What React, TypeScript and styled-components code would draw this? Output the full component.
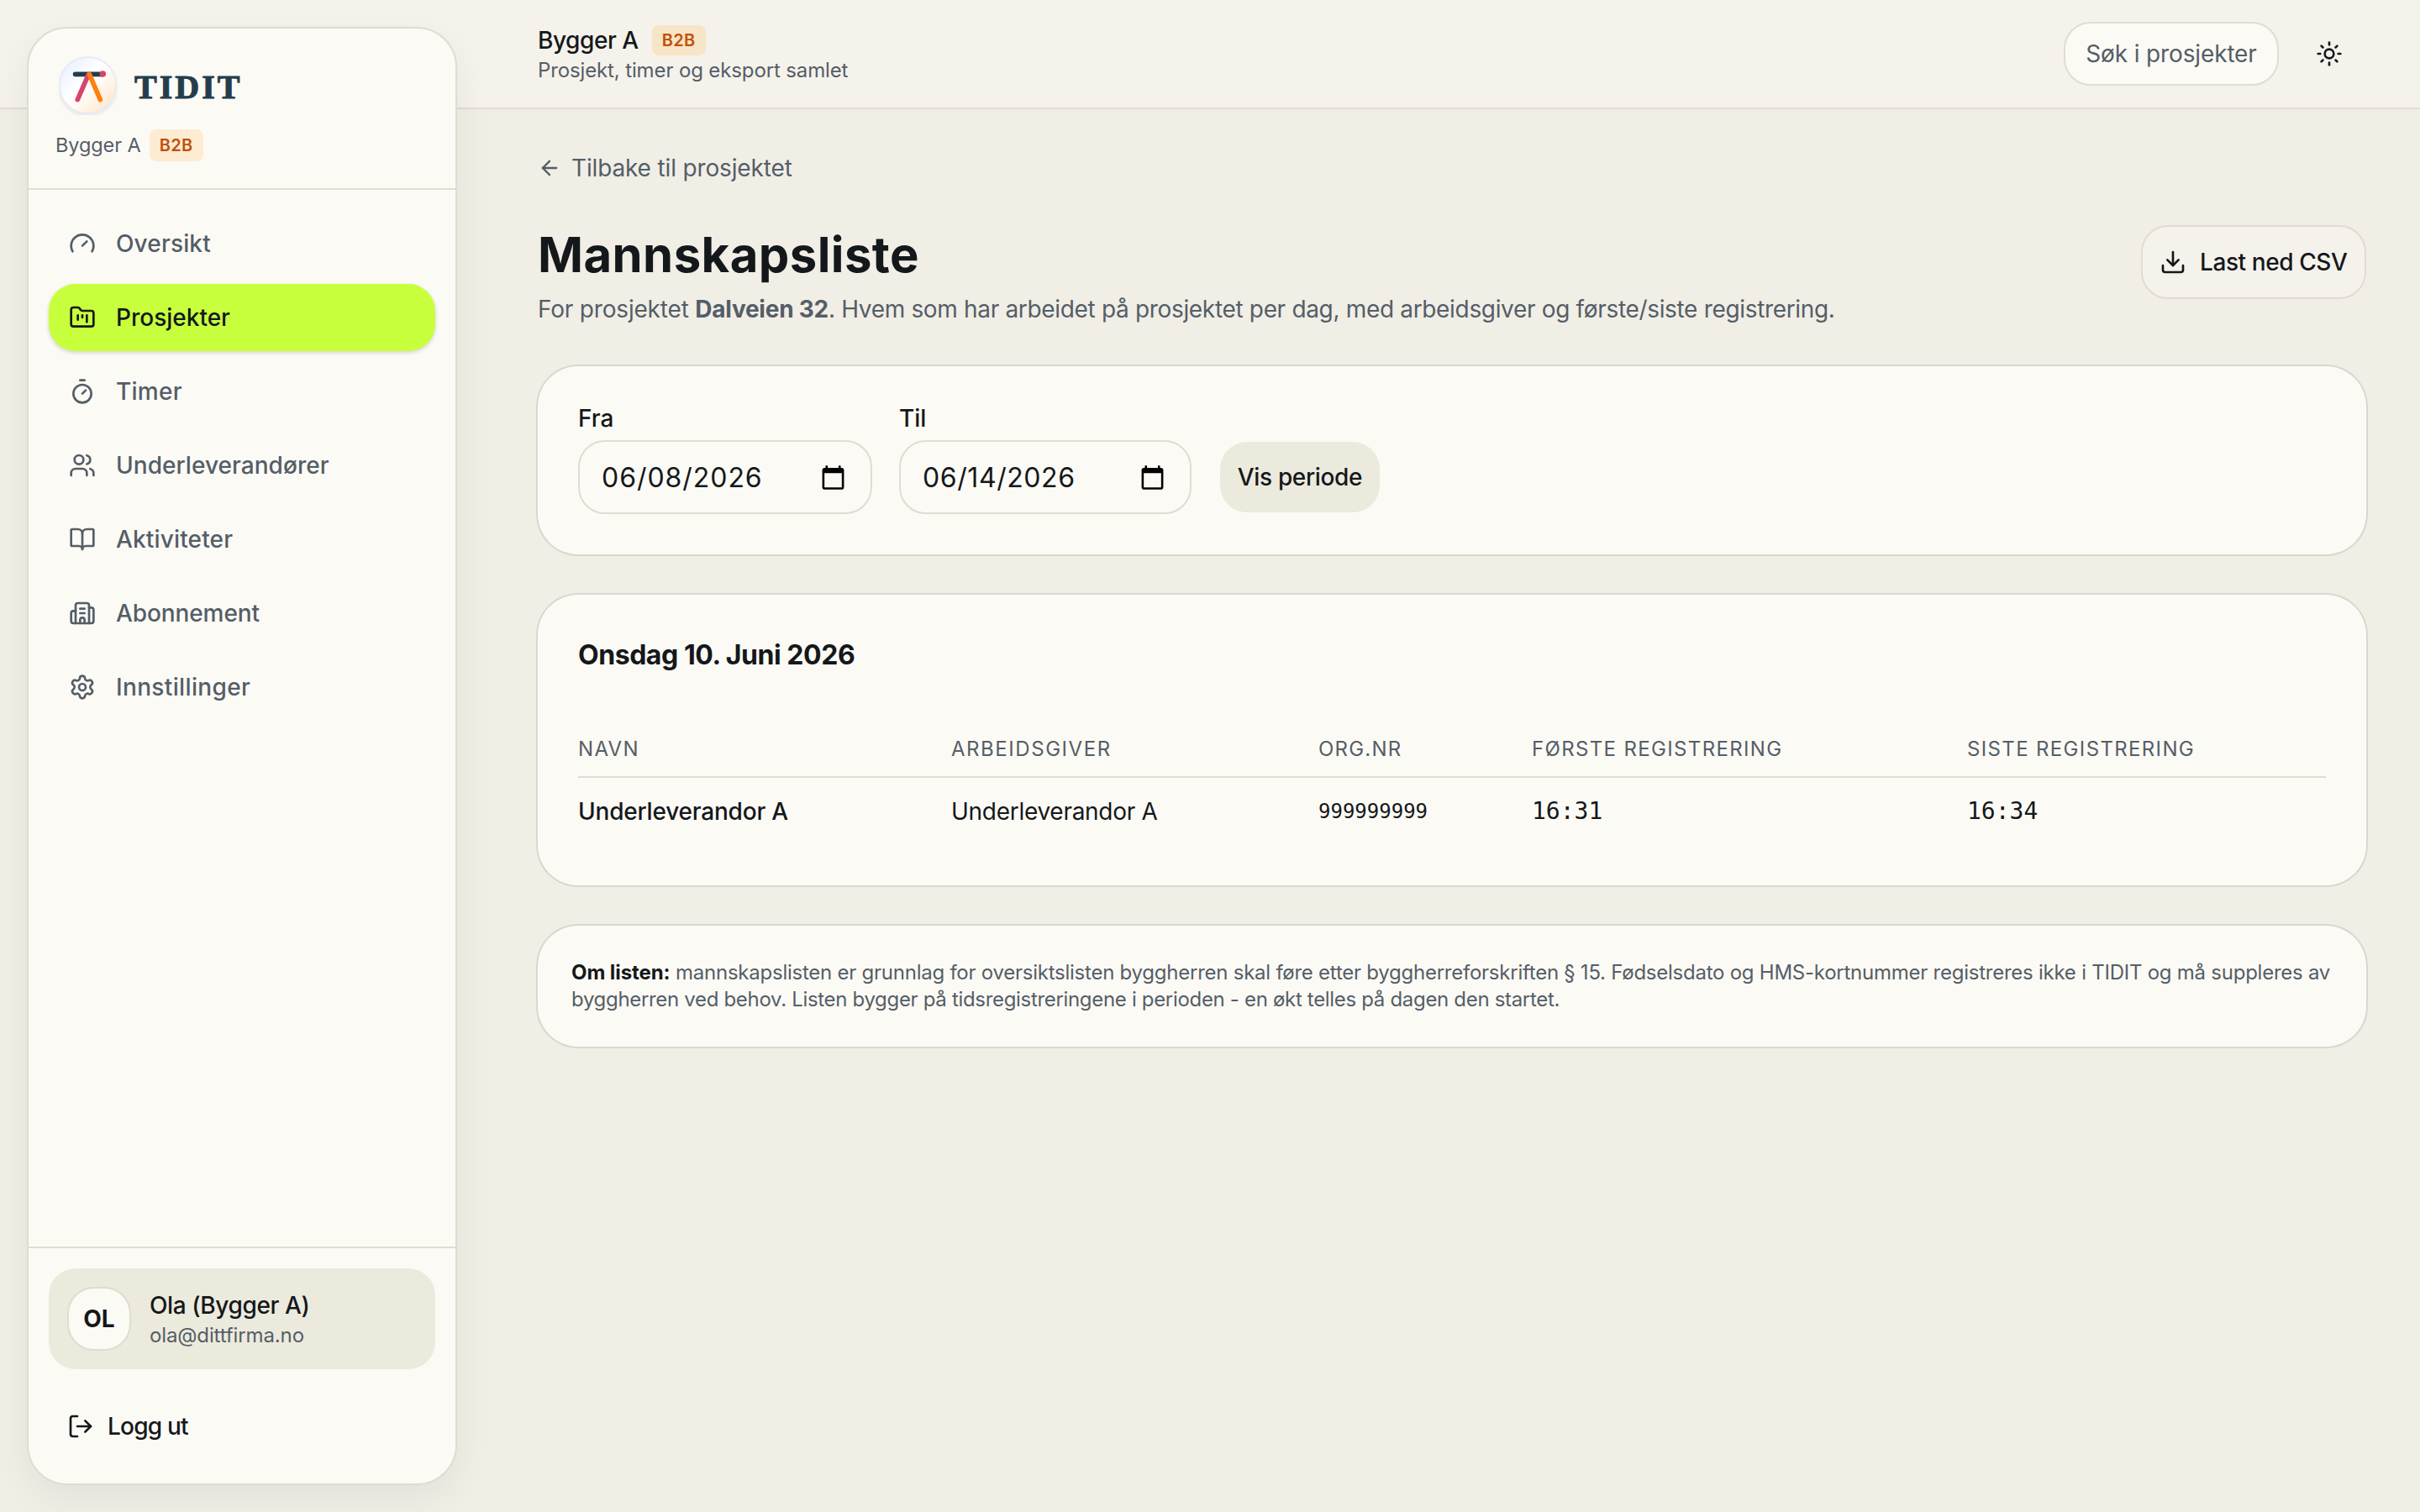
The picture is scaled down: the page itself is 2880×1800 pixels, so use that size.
import React from 'react';
import styled, { createGlobalStyle } from 'styled-components';
import {
  ArrowLeft,
  BookOpen,
  Building2,
  Download,
  FolderKanban,
  Gauge,
  LogOut,
  Settings,
  Sun,
  Timer,
  Users,
} from 'lucide-react';

const color = {
  page: '#f1eee6',
  bar: '#f5f2eb',
  card: '#fcfaf5',
  sand: '#eceadd',
  line: '#e0dccf',
  ring: '#dad7ce',
  ink: '#14181b',
  muted: '#545e67',
  lime: '#c8ff3d',
  orange: '#c2500a',
};

const GlobalStyle = createGlobalStyle`
  *, *::before, *::after { box-sizing: border-box; }
  body {
    margin: 0;
    background: ${color.page};
    color: ${color.ink};
    font-family: Inter, "Liberation Sans", sans-serif;
    font-size: 28px;
    line-height: 40px;
  }
  h1, h2, p { margin: 0; }
  svg { display: block; flex: none; }
`;

const Page = styled.div`
  display: grid;
  grid-template-columns: 576px minmax(0, 1fr);
  grid-template-rows: 130px minmax(0, 1fr);
  width: 100%;
  height: 1800px;
  overflow: hidden;
`;

const Text = styled.span<{ $ls?: number; $w?: number }>`
  letter-spacing: ${(p) => p.$ls ?? 0}px;
  font-weight: ${(p) => p.$w ?? 'inherit'};
  white-space: nowrap;
`;

/* Top bar */
const TopBar = styled.header`
  grid-column: 1 / -1;
  grid-row: 1;
  display: flex;
  align-items: center;
  justify-content: space-between;
  padding: 0 64px 0 640px;
  background: ${color.bar};
  border-bottom: 2px solid ${color.line};
`;

const Workspace = styled.div`
  display: flex;
  flex-direction: column;
`;

const WorkspaceName = styled.div`
  display: flex;
  align-items: center;
  gap: 16px;
  height: 40px;
  font-weight: 500;
`;

const Small = styled.div<{ $ls?: number }>`
  font-size: 24px;
  line-height: 32px;
  color: ${color.muted};
  letter-spacing: ${(p) => p.$ls ?? 0}px;
  white-space: nowrap;
`;

const Badge = styled.span<{ $tall?: boolean }>`
  display: flex;
  align-items: center;
  justify-content: center;
  width: 64px;
  height: ${(p) => (p.$tall ? 38 : 36)}px;
  padding-bottom: 1px;
  border-radius: 8px;
  background: ${(p) => (p.$tall ? '#fdecd2' : '#f7e5c8')};
  color: ${color.orange};
  font-size: 20px;
  line-height: 24px;
  font-weight: 600;
  letter-spacing: 0.3px;
`;

const TopActions = styled.div`
  display: flex;
  align-items: center;
  gap: 44px;
  padding-right: 28px;
`;

const SearchButton = styled.button`
  width: 256px;
  height: 76px;
  padding: 0;
  border: 2px solid ${color.line};
  border-radius: 32px;
  background: ${color.card};
  color: ${color.muted};
  font: inherit;
  letter-spacing: -0.14px;
`;

/* Sidebar */
const Sidebar = styled.aside`
  grid-column: 1;
  grid-row: 1 / 3;
  z-index: 1;
  display: flex;
  flex-direction: column;
  margin: 32px;
  border: 2px solid ${color.line};
  border-radius: 48px;
  background: ${color.card};
  box-shadow: 0 16px 48px rgba(20, 24, 28, 0.06);
`;

const Brand = styled.div`
  display: flex;
  flex-direction: column;
  gap: 17px;
  height: 192px;
  padding: 33px 32px 0;
  border-bottom: 2px solid ${color.line};
`;

const BrandRow = styled.div`
  display: flex;
  align-items: center;
  gap: 20px;
  height: 70px;
  padding-left: 4px;
`;

const BrandName = styled.span`
  padding-top: 3px;
  color: #233d4d;
  font: 700 40px/48px "Liberation Serif", serif;
  letter-spacing: 3px;
  -webkit-text-stroke: 1px #233d4d;
`;

const CompanyRow = styled.div`
  display: flex;
  align-items: center;
  gap: 10px;
  height: 38px;
  color: ${color.muted};
  font-size: 23.5px;
`;

const Nav = styled.nav`
  flex: 1;
  display: flex;
  flex-direction: column;
  gap: 8px;
  padding: 24px;
`;

const NavItem = styled.a<{ $active?: boolean }>`
  display: flex;
  align-items: center;
  gap: 24px;
  height: 80px;
  padding: 0 24px;
  border-radius: 32px;
  font-weight: ${(p) => (p.$active ? 500 : 450)};
  color: ${(p) => (p.$active ? color.ink : color.muted)};
  background: ${(p) => (p.$active ? color.lime : 'transparent')};
  box-shadow: ${(p) => (p.$active ? '0 2px 5px rgba(0, 0, 0, 0.16)' : 'none')};
`;

const SidebarFoot = styled.div`
  display: flex;
  flex-direction: column;
  gap: 28px;
  padding: 24px 24px 28px;
  border-top: 2px solid ${color.line};
`;

const UserCard = styled.div`
  display: flex;
  align-items: center;
  gap: 22px;
  height: 120px;
  padding: 0 22px;
  border-radius: 32px;
  background: ${color.sand};
`;

const Avatar = styled.div`
  display: flex;
  align-items: center;
  justify-content: center;
  width: 76px;
  height: 76px;
  border: 2px solid ${color.line};
  border-radius: 32px;
  background: ${color.card};
  font-size: 28px;
  font-weight: 650;
`;

const LogoutButton = styled.a`
  display: flex;
  align-items: center;
  gap: 16px;
  height: 80px;
  padding-left: 22px;
  font-weight: 500;
`;

/* Main column */
const Main = styled.main`
  grid-column: 2;
  grid-row: 2;
  display: flex;
  flex-direction: column;
  gap: 48px;
  padding: 50px 64px 0;
`;

const BackLink = styled.a`
  display: flex;
  align-items: center;
  gap: 12px;
  height: 40px;
  color: ${color.muted};
`;

const Heading = styled.div`
  display: flex;
  align-items: flex-start;
  justify-content: space-between;
  height: 120px;
`;

const Title = styled.h1`
  font-size: 58px;
  line-height: 70px;
  font-weight: 700;
  letter-spacing: 0.43px;
  margin-bottom: 10px;
`;

const Lead = styled.p`
  color: ${color.muted};
  white-space: nowrap;
`;

const OutlineButton = styled.button`
  display: flex;
  align-items: center;
  gap: 16px;
  width: 268px;
  height: 88px;
  padding: 0 0 0 20px;
  border: 2px solid ${color.line};
  border-radius: 32px;
  background: ${color.bar};
  color: ${color.ink};
  font: inherit;
  font-weight: 500;
  letter-spacing: -0.41px;
`;

const Card = styled.section`
  border-radius: 48px;
  background: ${color.card};
  box-shadow: 0 0 0 2px ${color.ring};
`;

const FilterCard = styled(Card)`
  display: flex;
  align-items: flex-end;
  padding: 48px;
`;

const Field = styled.label<{ $width: number; $gap: number }>`
  display: flex;
  flex-direction: column;
  gap: 12px;
  width: ${(p) => p.$width}px;
  margin-right: ${(p) => p.$gap}px;
  font-weight: 500;
  line-height: 28px;
`;

const DateBox = styled.span`
  display: flex;
  align-items: center;
  justify-content: space-between;
  height: 88px;
  padding: 0 29px 0 26px;
  border: 2px solid ${color.line};
  border-radius: 32px;
  font-size: 32px;
  line-height: 40px;
  font-weight: 400;
`;

const DateValue = styled(Text)`
  padding-top: 1px;
`;

const SoftButton = styled.button`
  width: 190px;
  height: 84px;
  margin-bottom: 2px;
  padding: 0;
  border: 0;
  border-radius: 32px;
  background: ${color.sand};
  color: ${color.ink};
  font: inherit;
  font-weight: 500;
  letter-spacing: -0.35px;
`;

const DayCard = styled(Card)`
  padding: 50px 48px 48px;
`;

const DayTitle = styled.h2`
  font-size: 32px;
  line-height: 44px;
  font-weight: 700;
  letter-spacing: -0.45px;
  margin-bottom: 57px;
`;

const Row = styled.div<{ $head?: boolean }>`
  display: grid;
  grid-template-columns: 444px 437px 254px 518px 1fr;
  align-items: center;
  height: ${(p) => (p.$head ? 67 : 80)}px;
  border-bottom: ${(p) => (p.$head ? `2px solid ${color.line}` : '0')};
  color: ${(p) => (p.$head ? color.muted : color.ink)};
  font-size: ${(p) => (p.$head ? 24 : 28)}px;
`;

const Mono = styled.span<{ $size: number; $ls: number }>`
  font-family: "DejaVu Sans Mono", monospace;
  font-size: ${(p) => p.$size}px;
  letter-spacing: ${(p) => p.$ls}px;
`;

const NoteCard = styled(Card)`
  display: flex;
  flex-direction: column;
  padding: 40px;
  color: ${color.muted};
  font-size: 24px;
  line-height: 32px;

  strong {
    color: ${color.ink};
    letter-spacing: -0.08px;
  }
`;

const NoteLine = styled.span<{ $ls: number }>`
  letter-spacing: ${(p) => p.$ls}px;
  white-space: nowrap;
`;

const Logo = () => (
  <svg width="70" height="70" viewBox="0 0 70 70">
    <defs>
      <linearGradient id="disc" x1="0.1" y1="0.1" x2="0.9" y2="0.9">
        <stop offset="0" stopColor="#eaf0ff" />
        <stop offset="0.42" stopColor="#ffffff" />
        <stop offset="0.6" stopColor="#fffaf4" />
        <stop offset="1" stopColor="#ffe7cc" />
      </linearGradient>
      <filter id="soft" x="-20%" y="-20%" width="140%" height="140%">
        <feDropShadow dx="0" dy="2" stdDeviation="2" floodColor="#233d4d" floodOpacity="0.12" />
      </filter>
    </defs>
    <circle cx="34.5" cy="34.5" r="33.5" fill="url(#disc)" stroke="#e4e8f6" strokeWidth="1.4" filter="url(#soft)" />
    <g strokeWidth="5.7" strokeLinecap="round">
      <path d="M19.6 21.3H51" stroke="#233d4d" />
      <path d="M35.2 21.8L22.3 51.6" stroke="#d6456b" />
      <path d="M36.6 21.8L49.3 51.6" stroke="#ff7f11" />
    </g>
    <circle cx="52.3" cy="21" r="3.8" fill="#d6456b" />
  </svg>
);

const CalendarIcon = () => (
  <svg width="31" height="31" viewBox="0 0 24 24">
    <path
      fill="#000"
      d="M20 3h-1V1h-2v2H7V1H5v2H4c-1.1 0-2 .9-2 2v16c0 1.1.9 2 2 2h16c1.1 0 2-.9 2-2V5c0-1.1-.9-2-2-2zm0 18H4V8h16v13z"
    />
  </svg>
);

const navItems = [
  { label: 'Oversikt', icon: Gauge, ls: 0.15 },
  { label: 'Prosjekter', icon: FolderKanban, ls: 0, active: true },
  { label: 'Timer', icon: Timer, ls: 0.25 },
  { label: 'Underleverandører', icon: Users, ls: 0.05 },
  { label: 'Aktiviteter', icon: BookOpen, ls: 0.15 },
  { label: 'Abonnement', icon: Building2, ls: -0.1 },
  { label: 'Innstillinger', icon: Settings, ls: 0.35 },
];

const columns = [
  { label: 'NAVN', ls: 1.3 },
  { label: 'ARBEIDSGIVER', ls: 1.55 },
  { label: 'ORG.NR', ls: 1.22 },
  { label: 'FØRSTE REGISTRERING', ls: 1.35 },
  { label: 'SISTE REGISTRERING', ls: 1.35 },
];

export default function App() {
  return (
    <Page>
      <GlobalStyle />
      <TopBar>
        <Workspace>
          <WorkspaceName>
            <Text $ls={-0.44}>Bygger A</Text>
            <Badge>B2B</Badge>
          </WorkspaceName>
          <Small $ls={-0.13}>Prosjekt, timer og eksport samlet</Small>
        </Workspace>
        <TopActions>
          <SearchButton>Søk i prosjekter</SearchButton>
          <Sun size={32} />
        </TopActions>
      </TopBar>

      <Sidebar>
        <Brand>
          <BrandRow>
            <Logo />
            <BrandName>TIDIT</BrandName>
          </BrandRow>
          <CompanyRow>
            <Text $ls={-0.1}>Bygger A</Text>
            <Badge $tall>B2B</Badge>
          </CompanyRow>
        </Brand>
        <Nav>
          {navItems.map(({ label, icon: Icon, ls, active }) => (
            <NavItem key={label} $active={active}>
              <Icon size={32} />
              <Text $ls={ls}>{label}</Text>
            </NavItem>
          ))}
        </Nav>
        <SidebarFoot>
          <UserCard>
            <Avatar>OL</Avatar>
            <div>
              <Text $ls={-0.4} $w={500}>Ola (Bygger A)</Text>
              <Small $ls={-0.13}>ola@dittfirma.no</Small>
            </div>
          </UserCard>
          <LogoutButton>
            <LogOut size={32} />
            <Text $ls={-0.79}>Logg ut</Text>
          </LogoutButton>
        </SidebarFoot>
      </Sidebar>

      <Main>
        <BackLink>
          <ArrowLeft size={28} />
          <Text $ls={-0.15}>Tilbake til prosjektet</Text>
        </BackLink>
        <Heading>
          <div>
            <Title>Mannskapsliste</Title>
            <Lead>
              <Text $ls={-0.19}>For prosjektet </Text>
              <Text $ls={-0.25} $w={700}>Dalveien 32</Text>
              <Text $ls={-0.33}>
                . Hvem som har arbeidet på prosjektet per dag, med arbeidsgiver og første/siste registrering.
              </Text>
            </Lead>
          </div>
          <OutlineButton>
            <Download size={32} />
            Last ned CSV
          </OutlineButton>
        </Heading>

        <FilterCard>
          <Field $width={350} $gap={32}>
            Fra
            <DateBox>
              <DateValue $ls={0.95}>06/08/2026</DateValue>
              <CalendarIcon />
            </DateBox>
          </Field>
          <Field $width={348} $gap={34}>
            Til
            <DateBox>
              <DateValue $ls={0.58}>06/14/2026</DateValue>
              <CalendarIcon />
            </DateBox>
          </Field>
          <SoftButton>Vis periode</SoftButton>
        </FilterCard>

        <DayCard>
          <DayTitle>Onsdag 10. Juni 2026</DayTitle>
          <Row $head>
            {columns.map((c) => (
              <Text key={c.label} $ls={c.ls}>{c.label}</Text>
            ))}
          </Row>
          <Row>
            <Text $ls={-0.2} $w={500}>Underleverandor A</Text>
            <Text $ls={-0.28}>Underleverandor A</Text>
            <Mono $size={24} $ls={0}>999999999</Mono>
            <Mono $size={28} $ls={0}>16:31</Mono>
            <Mono $size={28} $ls={0}>16:34</Mono>
          </Row>
        </DayCard>

        <NoteCard>
          <NoteLine $ls={-0.245}>
            <strong>Om listen:</strong> mannskapslisten er grunnlag for oversiktslisten byggherren skal føre etter
            byggherreforskriften § 15. Fødselsdato og HMS-kortnummer registreres ikke i TIDIT og må suppleres av
          </NoteLine>
          <NoteLine $ls={-0.32}>
            byggherren ved behov. Listen bygger på tidsregistreringene i perioden - en økt telles på dagen den startet.
          </NoteLine>
        </NoteCard>
      </Main>
    </Page>
  );
}
